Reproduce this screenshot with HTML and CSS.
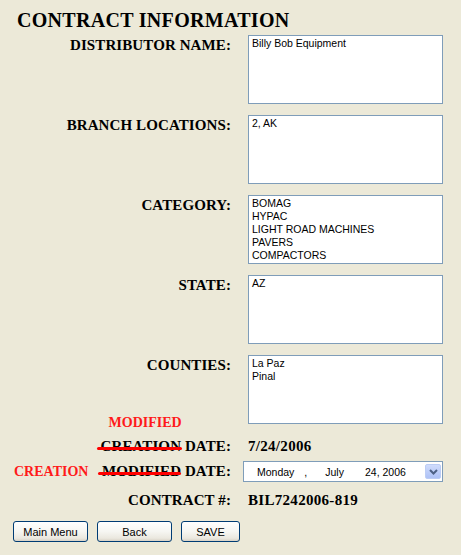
FILE: index.html
```html
<!DOCTYPE html>
<html>
<head>
<meta charset="utf-8">
<title>Contract Information</title>
<link rel="stylesheet" href="styles.css">
</head>
<body>
<div class="page">
  <h1 class="title">CONTRACT INFORMATION</h1>
  <div class="form">
    <div class="row">
      <div class="label">DISTRIBUTOR NAME:</div>
      <textarea class="box" readonly>Billy Bob Equipment</textarea>
    </div>
    <div class="row">
      <div class="label">BRANCH LOCATIONS:</div>
      <textarea class="box" readonly>2, AK</textarea>
    </div>
    <div class="row">
      <div class="label">CATEGORY:</div>
      <textarea class="box" readonly>BOMAG
HYPAC
LIGHT ROAD MACHINES
PAVERS
COMPACTORS</textarea>
    </div>
    <div class="row">
      <div class="label">STATE:</div>
      <textarea class="box" readonly>AZ</textarea>
    </div>
    <div class="row">
      <div class="label">COUNTIES:</div>
      <textarea class="box" readonly>La Paz
Pinal</textarea>
    </div>

    <div class="row row-date row-created">
      <div class="label label-plain"><span class="struck struck-creation">CREATION<span class="note note-above">MODIFIED</span></span> DATE:</div>
      <div class="value">7/24/2006</div>
    </div>
    <div class="row row-date row-modified">
      <div class="label label-plain label-split">
        <span class="note">CREATION</span>
        <span><span class="struck struck-modified">MODIFIED</span> DATE:</span>
      </div>
      <div class="datepick">
        <span class="seg seg-day">Monday</span>
        <span class="seg seg-comma">,</span>
        <span class="seg seg-month">July</span>
        <span class="seg seg-date">24, 2006</span>
        <span class="drop">
          <svg width="9" height="6" viewBox="0 0 9 6"><path d="M1 1 L4.5 4.5 L8 1" fill="none" stroke="#4d6185" stroke-width="2"/></svg>
        </span>
      </div>
    </div>
    <div class="row row-date row-contract">
      <div class="label label-plain">CONTRACT #:</div>
      <div class="value">BIL7242006-819</div>
    </div>
  </div>

  <div class="buttons">
    <button class="btn btn-wide">Main Menu</button>
    <button class="btn btn-wide">Back</button>
    <button class="btn btn-save">SAVE</button>
  </div>
</div>
</body>
</html>
```

FILE: styles.css
```css
html, body {
  margin: 0;
  padding: 0;
}

body {
  background: #ece9d8;
  font-family: "Liberation Serif", "Times New Roman", serif;
  color: #000;
}

.page {
  padding-top: 9px;
}

.title {
  margin: 0 0 0 17px;
  font-size: 20px;
  line-height: 23px;
  font-weight: 700;
  letter-spacing: 0.3px;
}

.form {
  margin-top: 3px;
  display: flex;
  flex-direction: column;
  gap: 11px;
}

.row {
  display: grid;
  grid-template-columns: 231px 1fr;
  column-gap: 12px;
  align-items: start;
}

.label {
  text-align: right;
  font-size: 15px;
  line-height: 17px;
  font-weight: 700;
  padding-top: 2px;
  white-space: nowrap;
  letter-spacing: 0.1px;
}

.label-plain {
  padding-top: 0;
}

.box {
  display: block;
  margin: 0 0 0 5px;
  width: 195px;
  height: 69px;
  box-sizing: border-box;
  border: 1px solid #7f9db9;
  padding: 1px 3px;
  background: #fff;
  color: #000;
  font-family: "Liberation Sans", Arial, sans-serif;
  font-size: 10.5px;
  line-height: 13px;
  resize: none;
  overflow: hidden;
  outline: none;
}

.row-created {
  margin-top: 3px;
}

.row-modified {
  margin-top: -5px;
}

.row-contract {
  margin-top: -1px;
}

.value {
  padding-left: 5px;
  font-size: 15px;
  line-height: 17px;
  font-weight: 700;
  white-space: nowrap;
  letter-spacing: 0.3px;
}

.struck {
  position: relative;
}

.struck::after {
  content: "";
  position: absolute;
  top: 9px;
  height: 3px;
  background: #ff0000;
  border-radius: 2px;
}

.struck-creation::after {
  left: -4px;
  right: -1px;
}

.struck-modified::after {
  left: -4px;
  right: 0;
}

.note {
  color: #ff1a1a;
  font-size: 14px;
  font-weight: 700;
  letter-spacing: 0;
}

.note-above {
  position: absolute;
  left: 8px;
  top: -24px;
  white-space: nowrap;
}

.label-split {
  display: flex;
  justify-content: space-between;
  align-items: baseline;
  padding-left: 14px;
  padding-top: 2px;
}

.datepick {
  width: 200px;
  height: 21px;
  box-sizing: border-box;
  border: 1px solid #7f9db9;
  background: #fff;
  display: flex;
  align-items: center;
  font-family: "Liberation Sans", Arial, sans-serif;
  font-size: 10.5px;
  color: #000;
  padding-right: 1px;
}

.seg-day {
  margin-left: 13px;
}

.seg-comma {
  margin-left: 10px;
}

.seg-month {
  margin-left: 18px;
}

.seg-date {
  margin-left: 21px;
}

.drop {
  margin-left: auto;
  width: 16px;
  height: 15px;
  box-sizing: border-box;
  border: 1px solid #bccdf5;
  border-radius: 2px;
  background: linear-gradient(180deg, #d0dcfc 0%, #bccdf9 55%, #aec2f6 100%);
  display: flex;
  align-items: center;
  justify-content: center;
}

.drop svg {
  display: block;
}

.buttons {
  margin: 12px 0 0 13px;
  display: flex;
  gap: 9px;
}

.btn {
  height: 21px;
  box-sizing: border-box;
  border: 1px solid #003c74;
  border-radius: 3px;
  background: linear-gradient(180deg, #ffffff 0%, #f6f6f2 50%, #ebe8df 85%, #d8d2c6 100%);
  font-family: "Liberation Sans", Arial, sans-serif;
  font-size: 11px;
  color: #000;
  padding: 0;
}

.btn-wide {
  width: 75px;
}

.btn-save {
  width: 59px;
}
```
